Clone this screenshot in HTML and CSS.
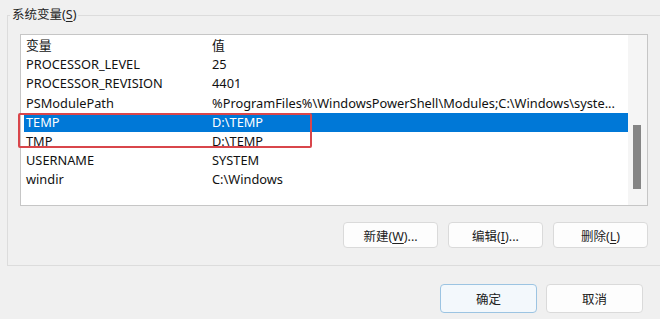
FILE: index.html
```html
<!DOCTYPE html>
<html lang="zh-CN">

<head>
    <meta charset="UTF-8">
    <title>系统变量</title>
    <link rel="stylesheet" href="styles.css">
</head>

<body>
    <fieldset class="varGroup">
        <legend>系统变量(<u>S</u>)</legend>
        <div class="varList">
            <div class="varRows">
                <div class="varRow head"><span class="colName">变量</span><span class="colValue">值</span></div>
                <div class="varRow"><span class="colName">PROCESSOR_LEVEL</span><span class="colValue">25</span></div>
                <div class="varRow"><span class="colName">PROCESSOR_REVISION</span><span class="colValue">4401</span></div>
                <div class="varRow"><span class="colName">PSModulePath</span><span class="colValue">%ProgramFiles%\WindowsPowerShell\Modules;C:\Windows\syste...</span></div>
                <div class="varRow selected"><span class="colName">TEMP</span><span class="colValue">D:\TEMP</span></div>
                <div class="varRow"><span class="colName">TMP</span><span class="colValue">D:\TEMP</span></div>
                <div class="varRow"><span class="colName">USERNAME</span><span class="colValue">SYSTEM</span></div>
                <div class="varRow"><span class="colName">windir</span><span class="colValue">C:\Windows</span></div>
                <div class="markBox"></div>
            </div>
            <div class="scrollTrack">
                <div class="scrollThumb"></div>
            </div>
        </div>
        <div class="listActions">
            <button class="winBtn small">新建(<u>W</u>)...</button>
            <button class="winBtn small">编辑(<u>I</u>)...</button>
            <button class="winBtn small">删除(<u>L</u>)</button>
        </div>
    </fieldset>

    <div class="dialogActions">
        <button class="winBtn big primary">确定</button>
        <button class="winBtn big">取消</button>
    </div>
</body>

</html>
```

FILE: styles.css
```css
body {
    margin: 0;
    background-color: #f0f0f0;
    font-family: "Noto Sans", "Noto Sans CJK SC", sans-serif;
    font-size: 12.8px;
    color: #111;
    overflow: hidden;
}

u {
    text-decoration-thickness: 1px;
    text-underline-offset: 2px;
}

.varGroup {
    margin: 7px -30px 0 7px;
    padding: 11px 0 17px 12px;
    border: 1px solid #dcdcdc;
}

.varGroup legend {
    margin-left: -10px;
    padding: 0 2px;
    font-size: 12.5px;
    color: #222;
    line-height: 16px;
}

.varList {
    width: 626px;
    height: 170px;
    display: flex;
    background-color: #fff;
    border: 1px solid #c6c6c6;
}

.varRows {
    flex: 1;
    position: relative;
    padding: 1px 0 0 3px;
}

.varRow {
    display: flex;
    height: 19.2px;
    line-height: 19px;
    white-space: nowrap;
}

.varRow.selected {
    background-color: #0078d7;
    color: #fff;
}

.colName {
    width: 186px;
    padding-left: 2px;
}

.colValue {
    flex: 1;
}

.markBox {
    position: absolute;
    left: -3px;
    top: 78px;
    width: 290px;
    height: 31px;
    border: 2px solid #d9464b;
    border-radius: 2px;
}

.scrollTrack {
    width: 19px;
    background-color: #f5f5f5;
    position: relative;
}

.scrollThumb {
    position: absolute;
    left: 5px;
    top: 90px;
    width: 8px;
    height: 64px;
    background-color: #858585;
}

.listActions {
    display: flex;
    gap: 10px;
    padding-left: 323px;
    margin-top: 16px;
}

.winBtn {
    font-family: "Noto Sans", "Noto Sans CJK SC", sans-serif;
    font-size: 12.5px;
    color: #222;
    background-color: #fdfdfd;
    border: 1px solid #dadada;
    border-radius: 4px;
    padding: 0;
}

.winBtn.small {
    width: 95px;
    height: 26px;
}

.dialogActions {
    display: flex;
    gap: 9px;
    padding-left: 440px;
    margin-top: 18px;
}

.winBtn.big {
    width: 97px;
    height: 29px;
}

.winBtn.primary {
    background-color: #f3f8fc;
    border-color: #9cc4e2;
}
```
